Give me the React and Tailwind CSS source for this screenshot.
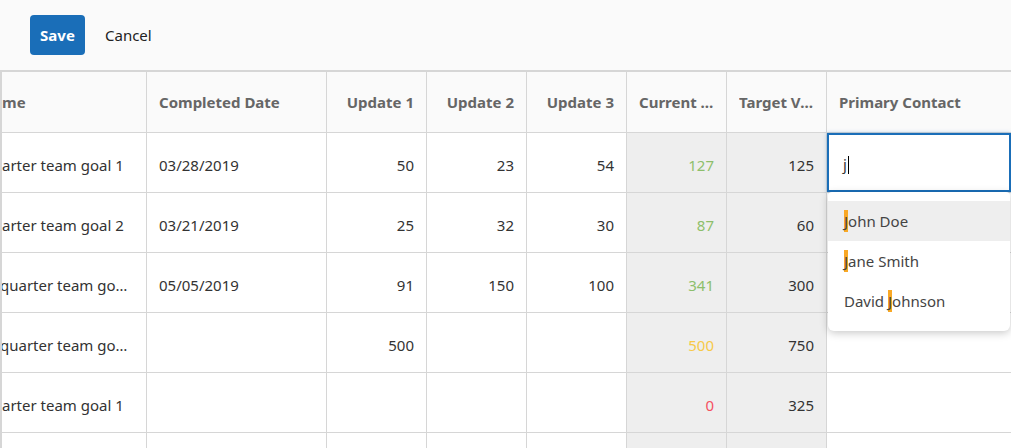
import React from "react";

const cols = "grid-cols-[145px_180px_100px_100px_100px_100px_100px_184px]";

const rows = [
  { name: "arter team goal 1", date: "03/28/2019", u1: "50", u2: "23", u3: "54", cur: "127", curC: "text-[#8dbf6b]", tgt: "125" },
  { name: "arter team goal 2", date: "03/21/2019", u1: "25", u2: "32", u3: "30", cur: "87", curC: "text-[#8dbf6b]", tgt: "60" },
  { name: "quarter team go…", date: "05/05/2019", u1: "91", u2: "150", u3: "100", cur: "341", curC: "text-[#8dbf6b]", tgt: "300" },
  { name: "quarter team go…", date: "", u1: "500", u2: "", u3: "", cur: "500", curC: "text-[#f7c948]", tgt: "750" },
  { name: "arter team goal 1", date: "", u1: "", u2: "", u3: "", cur: "0", curC: "text-[#f5515f]", tgt: "325" },
  { name: "", date: "", u1: "", u2: "", u3: "", cur: "", curC: "", tgt: "" },
];

const cell = "border-r border-b border-[#d6d6d6] flex items-center px-3 overflow-hidden whitespace-nowrap";
const bcell = `${cell} pt-[5px]`;

function Hl({ c }) {
  return <span className="bg-[#f9a825]">{c}</span>;
}

export default function App() {
  return (
    <div
      className="relative w-[1011px] h-[448px] overflow-hidden bg-white text-[15px] text-[#333]"
      style={{ fontFamily: '"Noto Sans", "Open Sans", sans-serif' }}
    >
      <div className="h-[70px] bg-[#fafafa] flex items-center pl-[30px] gap-[20px]">
        <button className="h-[40px] w-[55px] rounded-[4px] bg-[#1a6eb8] text-white font-bold text-[15px]">
          Save
        </button>
        <span className="text-[15px] text-[#222]">Cancel</span>
      </div>
      <div className="border-t-2 border-l-2 border-[#d6d6d6]">
        <div className={`grid ${cols} h-[61px] bg-[#fafafa] font-bold text-[#666]`}>
          <div className={`${cell} pl-0`}>me</div>
          <div className={cell}>Completed Date</div>
          <div className={`${cell} justify-end`}>Update 1</div>
          <div className={`${cell} justify-end`}>Update 2</div>
          <div className={`${cell} justify-end`}>Update 3</div>
          <div className={cell}><span className="truncate">Current Value</span></div>
          <div className={cell}><span className="truncate">Target Value</span></div>
          <div className={`${cell} border-r-0`}>Primary Contact</div>
        </div>
        {rows.map((r, i) => (
          <div key={i} className={`grid ${cols} h-[60px]`}>
            <div className={`${bcell} pl-0`}>
              <span className={r.name.startsWith("q") ? "-ml-[2px]" : ""}>{r.name}</span>
            </div>
            <div className={bcell}>{r.date}</div>
            <div className={`${bcell} justify-end`}>{r.u1}</div>
            <div className={`${bcell} justify-end`}>{r.u2}</div>
            <div className={`${bcell} justify-end`}>{r.u3}</div>
            <div className={`${bcell} justify-end bg-[#eeeeee] ${r.curC}`}>{r.cur}</div>
            <div className={`${bcell} justify-end bg-[#eeeeee]`}>{r.tgt}</div>
            <div className={`${bcell} border-r-0`}></div>
          </div>
        ))}
      </div>

      {/* Editor input */}
      <div className="absolute left-[827px] top-[133px] w-[184px] h-[59px] border-2 border-[#1a6eb8] bg-white flex items-center pl-[14px] pt-[4px] shadow-[0_0_4px_rgba(26,110,184,0.35)]">
        <span className="text-[#333]">j</span>
        <span className="ml-[1px] w-[1px] h-[18px] bg-black"></span>
      </div>

      {/* Dropdown */}
      <div className="absolute left-[828px] top-[192px] w-[182px] h-[139px] bg-white rounded-b-[6px] rounded-t-[4px] shadow-[0_2px_8px_rgba(0,0,0,0.22)] pt-[9px] text-[#444]">
        <div className="h-[40px] flex items-center pl-[16px] bg-[#eeeeee]">
          <Hl c="J" />ohn Doe
        </div>
        <div className="h-[40px] flex items-center pl-[16px]">
          <Hl c="J" />ane Smith
        </div>
        <div className="h-[40px] flex items-center pl-[16px] whitespace-pre">
          David <Hl c="J" />ohnson
        </div>
      </div>
    </div>
  );
}
